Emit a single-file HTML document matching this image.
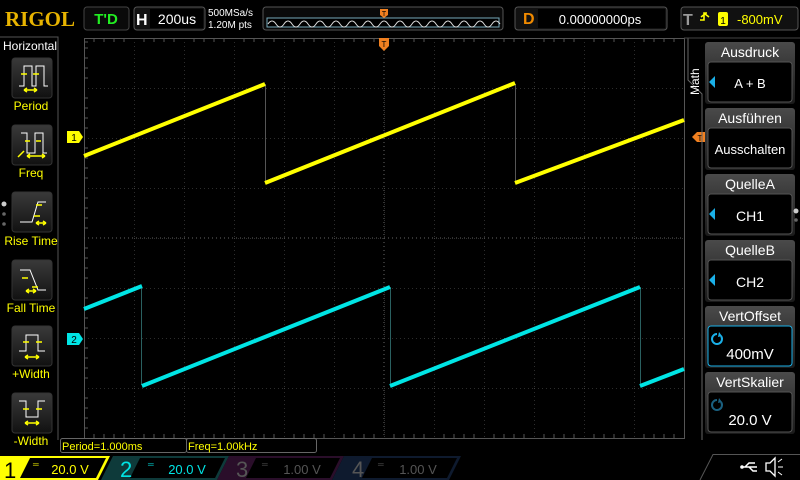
<!DOCTYPE html>
<html><head><meta charset="utf-8"><style>
html,body{margin:0;padding:0;background:#000;width:800px;height:480px;overflow:hidden}
svg{display:block}
text{font-family:"Liberation Sans",sans-serif}
</style></head><body>
<svg width="800" height="480" viewBox="0 0 800 480" xmlns="http://www.w3.org/2000/svg">
<defs>
<linearGradient id="btn" x1="0" y1="0" x2="0" y2="1"><stop offset="0" stop-color="#3a3a3a"/><stop offset="1" stop-color="#111"/></linearGradient>
<linearGradient id="hdr" x1="0" y1="0" x2="0" y2="1"><stop offset="0" stop-color="#4a4a4a"/><stop offset="1" stop-color="#1a1a1a"/></linearGradient>
<pattern id="grid" width="50" height="50" patternUnits="userSpaceOnUse" x="84" y="38"><path d="M0 0H50M0 0V50" stroke="#5a5a5a" stroke-width="1" stroke-dasharray="1,3" fill="none"/></pattern>
</defs>
<rect width="800" height="480" fill="#000"/>
<text x="5" y="26" font-weight="bold" font-size="21" textLength="70" lengthAdjust="spacingAndGlyphs" fill="#e8b400" style="font-family:'Liberation Serif',serif">RIGOL</text>
<rect x="84" y="7" width="45" height="23" rx="3" fill="#0a0a0a" stroke="#444"/>
<text x="106" y="24" text-anchor="middle" font-size="15" font-weight="bold" fill="#22ee22">T'D</text>
<rect x="134" y="7" width="71" height="23" rx="3" fill="#111" stroke="#555"/>
<text x="136" y="25" font-size="16" font-weight="bold" fill="#fff">H</text>
<rect x="150" y="9" width="53" height="19" fill="#000"/>
<text x="177" y="24" text-anchor="middle" font-size="14" fill="#fff">200us</text>
<text x="208" y="16" font-size="10" fill="#fff">500MSa/s</text>
<text x="208" y="28" font-size="10" fill="#fff">1.20M pts</text>
<rect x="263" y="7" width="240" height="23" rx="3" fill="#0a0a0a" stroke="#555"/>
<rect x="267" y="18" width="232" height="9" fill="#000" stroke="#7ab"/>
<path d="M268 24 q4 -6 8 0 q4 6 8 0 q4 -6 8 0 q4 6 8 0 q4 -6 8 0 q4 6 8 0 q4 -6 8 0 q4 6 8 0 q4 -6 8 0 q4 6 8 0 q4 -6 8 0 q4 6 8 0 q4 -6 8 0 q4 6 8 0 q4 -6 8 0 q4 6 8 0 q4 -6 8 0 q4 6 8 0 q4 -6 8 0 q4 6 8 0 q4 -6 8 0 q4 6 8 0 q4 -6 8 0 q4 6 8 0 q4 -6 8 0 q4 6 8 0 q4 -6 8 0 q4 6 8 0 q4 -6 8 0" stroke="#ddd" fill="none" stroke-width="1"/>
<path d="M380 9h8v6l-4 3l-4-3z" fill="#f08020"/><text x="384" y="16" font-size="7" text-anchor="middle" fill="#000">T</text>
<rect x="515" y="7" width="152" height="23" rx="3" fill="#111" stroke="#555"/>
<text x="523" y="24" font-size="16" font-weight="bold" fill="#f08a00">D</text>
<rect x="538" y="9" width="127" height="19" fill="#000"/>
<text x="600" y="24" text-anchor="middle" font-size="13" fill="#fff">0.00000000ps</text>
<rect x="681" y="7" width="117" height="23" rx="3" fill="#111" stroke="#555"/>
<text x="683" y="25" font-size="16" font-weight="bold" fill="#999">T</text>
<path d="M700 20h4v-7h3M701 17l4-3l4 3" stroke="#ffff00" stroke-width="1.6" fill="none"/>
<rect x="718" y="12" width="10" height="14" rx="2" fill="#ffff00"/><text x="723" y="24" font-size="10" text-anchor="middle" fill="#000">1</text>
<text x="737" y="24" font-size="13" fill="#ffff00">-800mV</text>
<path d="M0 37H58V440" stroke="#555" fill="none"/>
<text x="3" y="50" font-size="12" fill="#fff">Horizontal</text>
<g font-size="12" fill="#ffff00" text-anchor="middle">
<g transform="translate(12,58)"><rect width="40" height="40" rx="3" fill="url(#btn)" stroke="#333"/><path d="M7 28h5V8h8v20h4V8h8v20h4" stroke="#fff" fill="none"/><path d="M9 16h6M21 16h6M12 32h13M12 32l3-2M12 32l3 2M25 32l-3-2M25 32l-3 2" stroke="#ff0" fill="none" stroke-width="1.5"/></g>
<text x="31" y="110">Period</text>
<g transform="translate(12,125)"><rect width="40" height="40" rx="3" fill="url(#btn)" stroke="#333"/><path d="M9 8h6v20h8V8h8v20h4" stroke="#fff" fill="none"/><path d="M13 16h5M24 16h5M15 31h18M15 31l3-2M15 31l3 2M33 31l-3-2M33 31l-3 2M6 32l6-6" stroke="#ff0" fill="none" stroke-width="1.5"/></g>
<text x="31" y="177">Freq</text>
<g transform="translate(12,192)"><rect width="40" height="40" rx="3" fill="url(#btn)" stroke="#333"/><path d="M8 30h12l6-20h8" stroke="#fff" fill="none"/><path d="M22 24h6M24 13h6M24 31h10M24 31l3-2M24 31l3 2M34 31l-3-2M34 31l-3 2" stroke="#ff0" fill="none" stroke-width="1.5"/></g>
<text x="31" y="245">Rise Time</text>
<g transform="translate(12,260)"><rect width="40" height="40" rx="3" fill="url(#btn)" stroke="#333"/><path d="M8 10h10l8 20h8" stroke="#fff" fill="none"/><path d="M10 18h6M20 27h6M14 31h10M14 31l3-2M14 31l3 2M24 31l-3-2M24 31l-3 2" stroke="#ff0" fill="none" stroke-width="1.5"/></g>
<text x="31" y="312">Fall Time</text>
<g transform="translate(12,326)"><rect width="40" height="40" rx="3" fill="url(#btn)" stroke="#333"/><path d="M7 25h7V9h12v16h7" stroke="#fff" fill="none"/><path d="M11 16h6M24 16h6M13 31h14M13 31l3-2M13 31l3 2M27 31l-3-2M27 31l-3 2" stroke="#ff0" fill="none" stroke-width="1.5"/></g>
<text x="31" y="378">+Width</text>
<g transform="translate(12,393)"><rect width="40" height="40" rx="3" fill="url(#btn)" stroke="#333"/><path d="M7 8h7v16h12V8h7" stroke="#fff" fill="none"/><path d="M11 16h6M24 16h6M13 30h14M13 30l3-2M13 30l3 2M27 30l-3-2M27 30l-3 2" stroke="#ff0" fill="none" stroke-width="1.5"/></g>
<text x="31" y="445">-Width</text>
</g>
<circle cx="4" cy="204" r="2.5" fill="#ccc"/><circle cx="4" cy="214" r="1.8" fill="#666"/><circle cx="4" cy="224" r="1.8" fill="#666"/>
<rect x="84" y="38" width="600" height="400" fill="url(#grid)"/>
<rect x="84.5" y="38.5" width="600" height="400" fill="none" stroke="#555"/>
<path d="M384 38V438M84 238H684" stroke="#666" stroke-dasharray="1,3"/>
<g stroke="#555">
<path d="M84 42h4M84 48h4M84 58h4M84 68h4M84 78h4M84 98h4M84 108h4M84 118h4M84 128h4M84 148h4M84 158h4M84 168h4M84 178h4M84 198h4M84 208h4M84 218h4M84 228h4M84 248h4M84 258h4M84 268h4M84 278h4M84 298h4M84 308h4M84 318h4M84 328h4M84 348h4M84 358h4M84 368h4M84 378h4M84 398h4M84 408h4M84 418h4M84 428h4"/>
<path d="M94 38v4M104 38v4M114 38v4M124 38v4M144 38v4M154 38v4M164 38v4M174 38v4M194 38v4M204 38v4M214 38v4M224 38v4M244 38v4M254 38v4M264 38v4M274 38v4M294 38v4M304 38v4M314 38v4M324 38v4M344 38v4M354 38v4M364 38v4M374 38v4M394 38v4M404 38v4M414 38v4M424 38v4M444 38v4M454 38v4M464 38v4M474 38v4M494 38v4M504 38v4M514 38v4M524 38v4M544 38v4M554 38v4M564 38v4M574 38v4M594 38v4M604 38v4M614 38v4M624 38v4M644 38v4M654 38v4M664 38v4M674 38v4"/>
<path d="M94 434v4M104 434v4M114 434v4M124 434v4M144 434v4M154 434v4M164 434v4M174 434v4M194 434v4M204 434v4M214 434v4M224 434v4M244 434v4M254 434v4M264 434v4M274 434v4M294 434v4M304 434v4M314 434v4M324 434v4M344 434v4M354 434v4M364 434v4M374 434v4M394 434v4M404 434v4M414 434v4M424 434v4M444 434v4M454 434v4M464 434v4M474 434v4M494 434v4M504 434v4M514 434v4M524 434v4M544 434v4M554 434v4M564 434v4M574 434v4M594 434v4M604 434v4M614 434v4M624 434v4M644 434v4M654 434v4M664 434v4M674 434v4"/>
</g>
<path d="M265.5 84V183M515.5 84V183" stroke="#555" stroke-width="1"/>
<path d="M141.5 287V385M390.5 287V385M640.5 287V385" stroke="#2a6060" stroke-width="1"/>
<path d="M84 156L265 84M265 183L515 83M515 183L684 120" stroke="#ffff00" stroke-width="4" fill="none"/>
<path d="M84 309L142 286M142 386L390 287M390 386L640 287M640 386L684 369" stroke="#00e5e5" stroke-width="4" fill="none"/>
<path d="M67 131h12l4 6l-4 6h-12z" fill="#ffff00"/><text x="74" y="141" font-size="10" text-anchor="middle" fill="#000">1</text>
<path d="M67 333h12l4 6l-4 6h-12z" fill="#00e5e5"/><text x="74" y="343" font-size="10" text-anchor="middle" fill="#000">2</text>
<path d="M379 38h10v8l-5 5l-5-5z" fill="#f08020"/><text x="384" y="47" font-size="8" text-anchor="middle" fill="#000">T</text>
<path d="M692 137l5-5h8v10h-8z" fill="#f08020"/><text x="700" y="141" font-size="8" text-anchor="middle" fill="#000">T</text>
<rect x="60.5" y="438.5" width="126" height="14" rx="2" fill="#000" stroke="#666"/>
<text x="62" y="450" font-size="11" fill="#ffff00">Period=1.000ms</text>
<rect x="186.5" y="438.5" width="130" height="14" rx="2" fill="#000" stroke="#666"/>
<text x="188" y="450" font-size="11" fill="#ffff00">Freq=1.00kHz</text>
<path d="M688 38V80l14 14V440" stroke="#666" fill="none"/>
<path d="M684 38H800" stroke="#444"/>
<text transform="translate(699,95) rotate(-90)" font-size="12" fill="#fff">Math</text>
<g font-size="14" fill="#fff" text-anchor="middle">
<g transform="translate(705,42)"><rect width="90" height="62" rx="3" fill="url(#hdr)"/><rect x="3" y="20" width="84" height="40" rx="3" fill="#000" stroke="#555"/><text x="45" y="15">Ausdruck</text><path d="M4 40l6-6v12z" fill="#1ab0e8"/><text x="45" y="46" font-size="13">A + B</text></g>
<g transform="translate(705,108)"><rect width="90" height="62" rx="3" fill="url(#hdr)"/><rect x="3" y="20" width="84" height="40" rx="3" fill="#000" stroke="#555"/><text x="45" y="15">Ausführen</text><text x="45" y="46" font-size="13">Ausschalten</text></g>
<g transform="translate(705,174)"><rect width="90" height="62" rx="3" fill="url(#hdr)"/><rect x="3" y="20" width="84" height="40" rx="3" fill="#000" stroke="#555"/><text x="45" y="15">QuelleA</text><path d="M4 40l6-6v12z" fill="#1ab0e8"/><text x="45" y="47">CH1</text></g>
<g transform="translate(705,240)"><rect width="90" height="62" rx="3" fill="url(#hdr)"/><rect x="3" y="20" width="84" height="40" rx="3" fill="#000" stroke="#555"/><text x="45" y="15">QuelleB</text><path d="M4 40l6-6v12z" fill="#1ab0e8"/><text x="45" y="47">CH2</text></g>
<g transform="translate(705,306)"><rect width="90" height="62" rx="3" fill="url(#hdr)"/><rect x="3" y="20" width="84" height="40" rx="3" fill="#000" stroke="#1ab0e8"/><text x="45" y="15">VertOffset</text><path d="M12 28a5 5 0 1 0 4 2" stroke="#1ab0e8" stroke-width="2" fill="none"/><path d="M14 26l3 4l-4 1z" fill="#1ab0e8"/><text x="45" y="53" font-size="15">400mV</text></g>
<g transform="translate(705,372)"><rect width="90" height="62" rx="3" fill="url(#hdr)"/><rect x="3" y="20" width="84" height="40" rx="3" fill="#000" stroke="#555"/><text x="45" y="15">VertSkalier</text><path d="M12 28a5 5 0 1 0 4 2" stroke="#1a6080" stroke-width="2" fill="none"/><path d="M14 26l3 4l-4 1z" fill="#1a6080"/><text x="45" y="53" font-size="15">20.0 V</text></g>
</g>
<circle cx="796" cy="211" r="2.5" fill="#ccc"/><circle cx="796" cy="220" r="1.8" fill="#666"/>
<path d="M0 456H73L62 480H0z" fill="#ffff00"/>
<path d="M20 456H110L98 480H10z" fill="#ffff00"/>
<path d="M30 458H106L96 478H20z" fill="#000"/>
<text x="4" y="478" font-size="22" fill="#000">1</text>
<text x="33" y="467" font-size="8" fill="#ffff00">═</text>
<text x="70" y="474" font-size="13" text-anchor="middle" fill="#ffff00">20.0 V</text>
<path d="M113 456H229L217 480H101z" fill="#0e3a3a"/>
<path d="M140 458H225L215 478H130z" fill="#000"/>
<text x="120" y="477" font-size="22" fill="#00e5e5">2</text>
<text x="148" y="467" font-size="8" fill="#00e5e5">═</text>
<text x="187" y="474" font-size="13" text-anchor="middle" fill="#00e5e5">20.0 V</text>
<path d="M229 456H344L332 480H217z" fill="#2a0e2a"/>
<path d="M256 458H340L330 478H246z" fill="#000"/>
<text x="236" y="477" font-size="22" fill="#555">3</text>
<text x="262" y="467" font-size="8" fill="#555">═</text>
<text x="302" y="474" font-size="13" text-anchor="middle" fill="#555">1.00 V</text>
<path d="M344 456H461L449 480H332z" fill="#0e1a2e"/>
<path d="M372 458H457L447 478H362z" fill="#000"/>
<text x="352" y="477" font-size="22" fill="#555">4</text>
<text x="378" y="467" font-size="8" fill="#555">═</text>
<text x="418" y="474" font-size="13" text-anchor="middle" fill="#555">1.00 V</text>
<path d="M700 480L713 454.5H800" stroke="#555" fill="none"/>
<path d="M741 467h16M745 467l4-4h6M749 467l4 4h4" stroke="#fff" stroke-width="1.5" fill="none"/><circle cx="742" cy="467" r="1.8" fill="#fff"/>
<path d="M766 463h4l5-5v18l-5-5h-4z" stroke="#fff" stroke-width="1.3" fill="none"/><path d="M778 462l4-3M778 467h5M778 472l4 3" stroke="#fff"/>
</svg>
</body></html>
